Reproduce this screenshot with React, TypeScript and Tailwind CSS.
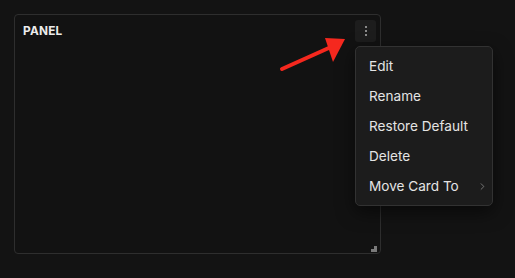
import { ChevronRight } from "lucide-react"

const items = ["Edit", "Rename", "Restore Default", "Delete", "Move Card To"]

function Kebab() {
  return (
    <button className="w-[21px] h-[22px] rounded-[3px] bg-[#1d1d1d] flex flex-col items-center justify-center gap-[2px]">
      <span className="block w-[2px] h-[2px] bg-[#8a8a8a]" />
      <span className="block w-[2px] h-[2px] bg-[#8a8a8a]" />
      <span className="block w-[2px] h-[2px] bg-[#8a8a8a]" />
    </button>
  )
}

function Menu() {
  return (
    <div className="absolute left-[355px] top-[46px] w-[138px] py-[4px] rounded-[5px] border border-[#323232] bg-[#1c1c1c] shadow-[0_6px_18px_rgba(0,0,0,0.55)]">
      {items.map((item) => (
        <div key={item} className="h-[30px] pl-[13px] pr-[4px] flex items-center justify-between text-[13.6px] text-[#e4e4e4]">
          <span>{item}</span>
          {item === "Move Card To" && <ChevronRight size={11} strokeWidth={1.5} className="text-[#9a9a9a]" />}
        </div>
      ))}
    </div>
  )
}

export default function App() {
  return (
    <main className="relative w-[515px] h-[278px] bg-[#131313] p-[14px] font-['Inter',sans-serif]">
      <div className="relative w-[367px] h-[240px] rounded-[4px] border border-[#2e2e2e] bg-[#121212]">
        {/* Header */}
        <div className="flex items-start justify-between pl-[8px] pr-[4px] pt-[5px]">
          <h2 className="pt-[3px] text-[11.8px] font-bold tracking-[0.02em] text-[#ececec]">PANEL</h2>
          <Kebab />
        </div>
        {/* resize handle */}
        <div className="absolute right-[3px] bottom-[1px] w-[6px] h-[6px]">
          <div className="absolute right-0 bottom-0 w-[6px] h-[3px] bg-[#7a7a7a]" />
          <div className="absolute right-0 bottom-0 w-[3px] h-[6px] bg-[#7a7a7a]" />
        </div>
      </div>

      <Menu />

      {/* annotation arrow */}
      <svg className="absolute left-0 top-0 pointer-events-none" width="515" height="278">
        <line x1="282" y1="69" x2="331" y2="47" stroke="#f5281e" strokeWidth="4" strokeLinecap="round" />
        <polygon points="325,38 345,39 333,62" fill="#f5281e" />
      </svg>
    </main>
  )
}
